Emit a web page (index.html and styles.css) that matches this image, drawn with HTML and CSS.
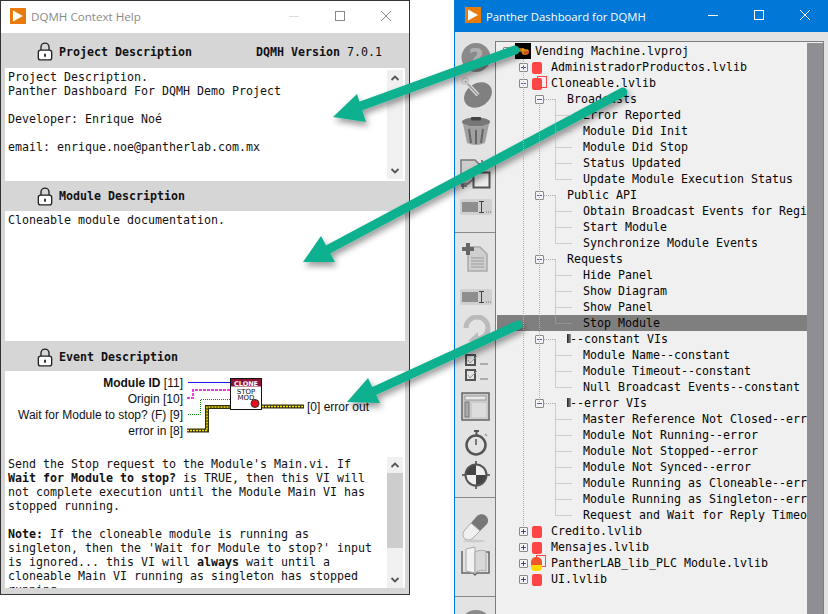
FILE: index.html
```html
<!DOCTYPE html>
<html lang="en">
<head>
<meta charset="utf-8">
<title>DQMH Context Help and Panther Dashboard</title>
<link rel="stylesheet" href="styles.css">
</head>
<body>
<div class="desktop">
  <section class="help-window">
    <header class="titlebar help-title">
      <svg class="app-icon" viewBox="0 0 16 16"><rect width="16" height="16" fill="#e87b0c"/><path d="M3 2.500L13 8L3 13.500Z" fill="#fff"/></svg>
      <span class="title-text">DQMH Context Help</span>
      <span class="win-controls">
        <svg class="ctl" viewBox="0 0 46 30"><path d="M18 15.500H28" stroke="#ddd"/></svg>
        <svg class="ctl" viewBox="0 0 46 30"><rect x="18.500" y="10.500" width="9" height="9" fill="none" stroke="#888"/></svg>
        <svg class="ctl" viewBox="0 0 46 30"><path d="M18 10L28 20M28 10L18 20" stroke="#888" fill="none"/></svg>
      </span>
    </header>
    <div class="section-head head-project">
      <svg class="lock" viewBox="0 0 18 22"><path d="M4.500 10V6a4.500 4.500 0 0 1 9 0V10" fill="none" stroke="#222" stroke-width="1.500"/><rect x="1.500" y="9.500" width="15" height="11" rx="2.500" fill="#fff" stroke="#222" stroke-width="1.500"/><path d="M9 13.500V17" stroke="#222" stroke-width="2"/></svg>
      <b class="head-label">Project Description</b>
      <span class="version"><b>DQMH Version</b> 7.0.1</span>
    </div>
    <div class="pane pane-project">
      <pre class="pane-text text-project">Project Description.
Panther Dashboard For DQMH Demo Project

Developer: Enrique Noé

email: enrique.noe@pantherlab.com.mx</pre>
      <div class="scroll">
        <svg class="chev" viewBox="0 0 16 16"><path d="M4.500 10L8 6.500L11.500 10" fill="none" stroke="#555" stroke-width="1.800"/></svg>
        <svg class="chev" viewBox="0 0 16 16"><path d="M4.500 6L8 9.500L11.500 6" fill="none" stroke="#555" stroke-width="1.800"/></svg>
      </div>
    </div>
    <div class="section-head head-module">
      <svg class="lock" viewBox="0 0 18 22"><path d="M4.500 10V6a4.500 4.500 0 0 1 9 0V10" fill="none" stroke="#222" stroke-width="1.500"/><rect x="1.500" y="9.500" width="15" height="11" rx="2.500" fill="#fff" stroke="#222" stroke-width="1.500"/><path d="M9 13.500V17" stroke="#222" stroke-width="2"/></svg>
      <b class="head-label">Module Description</b>
    </div>
    <div class="pane pane-module">
      <pre class="pane-text text-module">Cloneable module documentation.</pre>
    </div>
    <div class="section-head head-event">
      <svg class="lock" viewBox="0 0 18 22"><path d="M4.500 10V6a4.500 4.500 0 0 1 9 0V10" fill="none" stroke="#222" stroke-width="1.500"/><rect x="1.500" y="9.500" width="15" height="11" rx="2.500" fill="#fff" stroke="#222" stroke-width="1.500"/><path d="M9 13.500V17" stroke="#222" stroke-width="2"/></svg>
      <b class="head-label">Event Description</b>
    </div>
    <div class="pane pane-event">
      <div class="connector">
        <div class="terminals">
          <div><b>Module ID</b> [11]</div>
          <div>Origin [10]</div>
          <div>Wait for Module to stop? (F) [9]</div>
          <div>error in [8]</div>
        </div>
        <svg class="wires" viewBox="0 0 118 56" width="118" height="56">
          <path d="M1 4.500H43" stroke="#1a1ae6" fill="none"/>
          <path d="M0 20H6V12H43" stroke="#f03ce0" stroke-width="2" stroke-dasharray="3 1" fill="none"/>
          <path d="M1 36.500H13.500V21.500H43" stroke="#0a8a0a" stroke-dasharray="1 1" fill="none"/>
          <path d="M0 52.500H20V29H43" stroke="#33310a" stroke-width="4" fill="none"/>
          <path d="M0 52.500H20V29H43" stroke="#ffe600" stroke-width="1.500" stroke-dasharray="2 1" fill="none"/>
          <path d="M75 28.500H117" stroke="#33310a" stroke-width="4" fill="none"/>
          <path d="M75 28.500H117" stroke="#ffe600" stroke-width="1.500" stroke-dasharray="2 1" fill="none"/>
          <rect x="43.500" y="0.500" width="31" height="31" fill="#fff" stroke="#111"/>
          <rect x="44" y="1" width="30" height="7.500" fill="#8e1238"/>
          <text class="icon-head" x="59" y="7.500" text-anchor="middle">CLONE</text>
          <text class="icon-text" x="59" y="16" text-anchor="middle">STOP</text>
          <text class="icon-text" x="59" y="22" text-anchor="middle">MOD</text>
          <circle cx="68" cy="25.500" r="4" fill="#e8101c" stroke="#333"/>
        </svg>
        <div class="output">[0] error out</div>
      </div>
      <div class="event-body">
        <pre class="pane-text event-text">Send the Stop request to the Module's Main.vi. If
<b>Wait for Module to stop?</b> is TRUE, then this VI will
not complete execution until the Module Main VI has
stopped running.

<b>Note:</b> If the cloneable module is running as
singleton, then the 'Wait for Module to stop?' input
is ignored... this VI will <b>always</b> wait until a
cloneable Main VI running as singleton has stopped
running.</pre>
        <div class="scroll scroll-event">
          <svg class="chev" viewBox="0 0 16 16"><path d="M4.500 10L8 6.500L11.500 10" fill="none" stroke="#555" stroke-width="1.800"/></svg>
          <span class="thumb"></span>
          <svg class="chev chev-end" viewBox="0 0 16 16"><path d="M4.500 6L8 9.500L11.500 6" fill="none" stroke="#555" stroke-width="1.800"/></svg>
        </div>
      </div>
    </div>
  </section>

  <section class="dash-window">
    <header class="titlebar dash-title">
      <svg class="app-icon" viewBox="0 0 16 16"><rect width="16" height="16" fill="#e87b0c"/><path d="M3 2.500L13 8L3 13.500Z" fill="#fff"/></svg>
      <span class="title-text">Panther Dashboard for DQMH</span>
      <span class="win-controls">
        <svg class="ctl" viewBox="0 0 46 32"><path d="M18 15.500H28" stroke="#fff"/></svg>
        <svg class="ctl" viewBox="0 0 46 32"><rect x="18.500" y="10.500" width="9" height="9" fill="none" stroke="#fff"/></svg>
        <svg class="ctl" viewBox="0 0 46 32"><path d="M18 10L28 20M28 10L18 20" stroke="#fff" fill="none"/></svg>
      </span>
    </header>
    <div class="dash-body">
      <nav class="toolbar">
        <svg class="tool t-help" viewBox="0 0 32 32"><circle cx="16" cy="14.500" r="14.500" fill="#8a8a8a"/><text class="q-mark" x="16" y="25" text-anchor="middle">?</text></svg>
        <svg class="tool t-wrench" viewBox="0 0 32 32"><ellipse cx="18" cy="18" rx="15" ry="11.500" fill="#808080" transform="rotate(-35 18 18)"/><path d="M5 4L18 18" stroke="#ddd" stroke-width="4"/><path d="M5 4L18 18" stroke="#999" stroke-width="1.500"/><circle cx="5" cy="4" r="3" fill="none" stroke="#ccc" stroke-width="2"/></svg>
        <svg class="tool t-trash" viewBox="0 0 32 32"><ellipse cx="16" cy="8" rx="14" ry="4.500" fill="#777"/><rect x="11" y="3" width="10" height="3.500" rx="1" fill="#444"/><path d="M3 10L7 29Q16 33 25 29L29 10Q16 15 3 10Z" fill="#a0a0a0"/><path d="M9 15L11 29M16 16V30M23 15L21 29" stroke="#666" stroke-width="2"/></svg>
        <svg class="tool t-files" viewBox="0 0 32 32"><path d="M1 1H15L20 6V14L8 25H1Z" fill="#ccc" stroke="#777" stroke-width="1.500"/><rect x="13.500" y="13.500" width="16" height="15" fill="#eee" stroke="#555" stroke-width="2"/><path d="M22 1V9M18 5H26M3 25V30M1 27H7" stroke="#666" stroke-width="1.500"/></svg>
        <svg class="tool t-rename" viewBox="0 0 32 16"><rect x="0" y="0" width="32" height="16" rx="2" fill="#d0d0d0"/><rect x="2" y="3" width="16" height="10" fill="#8e8e8e"/><path d="M19 2.500H24M19 13.500H24M21.500 2.500V13.500" stroke="#444"/><path d="M26 13H31" stroke="#777" stroke-dasharray="1 1"/></svg>
        <hr class="tool-sep sep-one">
        <svg class="tool t-add" viewBox="0 0 32 32"><path d="M8 5H20L27 12V29H8Z" fill="#cfcfcf" stroke="#aaa" stroke-width="1.500"/><path d="M11 16H24M11 19H24M11 22H24M11 25H24" stroke="#999"/><path d="M8 1V13M2 7H14" stroke="#666" stroke-width="4"/></svg>
        <svg class="tool t-rename2" viewBox="0 0 32 16"><rect x="0" y="0" width="32" height="16" rx="2" fill="#d0d0d0"/><rect x="2" y="3" width="16" height="10" fill="#8e8e8e"/><path d="M19 2.500H24M19 13.500H24M21.500 2.500V13.500" stroke="#444"/><path d="M26 13H31" stroke="#777" stroke-dasharray="1 1"/></svg>
        <svg class="tool t-undo" viewBox="0 0 32 32"><path d="M6 13A11 11 0 1 1 17 24" fill="none" stroke="#bbb" stroke-width="5"/><path d="M8 26L18 17V28Z" fill="#bbb"/></svg>
        <svg class="tool t-check" viewBox="0 0 32 32"><rect x="6" y="1" width="9" height="10" fill="#e4e4e4" stroke="#555" stroke-width="2"/><rect x="6" y="16" width="9" height="10" fill="#e4e4e4" stroke="#555" stroke-width="2"/><path d="M8 6L10 9L17 2M8 21L10 24L17 17" stroke="#999" fill="none"/><path d="M20 10H28M20 25H28" stroke="#777"/></svg>
        <svg class="tool t-panel" viewBox="0 0 32 32"><rect x="2" y="1" width="27" height="27" fill="#ccc" stroke="#666" stroke-width="1.500"/><rect x="5" y="4" width="21" height="4" fill="#e8e8e8" stroke="#999"/><rect x="5" y="10" width="4" height="15" fill="#aaa" stroke="#777"/><rect x="12" y="11" width="14" height="14" fill="#ddd"/></svg>
        <svg class="tool t-timer" viewBox="0 0 32 32"><path d="M14 2H19M16.500 2V6" stroke="#555" stroke-width="2"/><circle cx="16" cy="16" r="9.500" fill="#e4e4e4" stroke="#555" stroke-width="2.500"/><path d="M16 10V16" stroke="#555" stroke-width="1.500"/><path d="M25 5L27 7" stroke="#999" stroke-width="1.500"/></svg>
        <svg class="tool t-target" viewBox="0 0 32 32"><path d="M16 2V30M2 16H30" stroke="#444" stroke-width="1.500"/><circle cx="16" cy="16" r="10.500" fill="#eee" stroke="#555" stroke-width="2"/><path d="M16 6A10 10 0 0 0 6 16H16ZM16 16V26A10 10 0 0 0 26 16Z" fill="#444"/></svg>
        <hr class="tool-sep sep-two">
        <svg class="tool t-pill" viewBox="0 0 32 32"><path d="M17 5L11 12L20 20L27 13C31 7 23 0 17 5Z" fill="#777"/><path d="M11 12L4 20C0 27 8 32 13 27L20 20Z" fill="#f0f0f0" stroke="#aaa"/><ellipse cx="14" cy="30" rx="11" ry="1.500" fill="#ccc"/></svg>
        <svg class="tool t-book" viewBox="0 0 32 32"><path d="M2 5V27H13L15 29L17 27H29V6H24" fill="#e2e2e2" stroke="#666" stroke-width="1.500"/><path d="M6 3L15 1V27L6 25Z" fill="#f2f2f2" stroke="#aaa"/><path d="M15 6C19 4 22 4 26 5V25C22 24 19 24 15 27Z" fill="#d8d8d8" stroke="#aaa"/></svg>
        <hr class="tool-sep sep-three">
        <div class="t-partial"></div>
      </nav>
      <div class="tree-frame">
        <div class="tree">
          <svg class="guides" width="310" height="560" viewBox="0 0 310 560">
            <path d="M26.500 16V484M42.500 60V360M47 56.500H58.500M47 216.500H58.500M47 152.500H58.500M47 296.500H58.500M47 360.500H58.500M58.500 56.500V136.500M58.500 152.500V200.500M58.500 216.500V280.500M58.500 296.500V344.500M58.500 360.500V472.500M58.500 72.500H75M58.500 88.500H75M58.500 104.500H75M58.500 120.500H75M58.500 136.500H75M58.500 168.500H75M58.500 184.500H75M58.500 200.500H75M58.500 232.500H75M58.500 248.500H75M58.500 264.500H75M58.500 280.500H75M58.500 312.500H75M58.500 328.500H75M58.500 344.500H75M58.500 376.500H75M58.500 392.500H75M58.500 408.500H75M58.500 424.500H75M58.500 440.500H75M58.500 456.500H75M58.500 472.500H75" stroke="#aaa" stroke-dasharray="1 1" fill="none"/>
          </svg>
          <div class="row lv0"><span class="box"></span><svg class="lvproj" viewBox="0 0 16 16"><rect width="16" height="16" fill="#000"/><path d="M3 5H8L11 7H14V10L12 12H8L6 9H3Z" fill="#c9571a"/><path d="M4 7H13M8 5V11" stroke="#f2c21c"/></svg><span class="lbl">Vending Machine.lvproj</span></div>
          <div class="row lv1"><span class="box plus"></span><span class="lib"></span><span class="lbl">AdministradorProductos.lvlib</span></div>
          <div class="row lv1"><span class="box"></span><span class="lib framed"></span><span class="lbl">Cloneable.lvlib</span></div>
          <div class="row lv2"><span class="box"></span><span class="lbl">Broadcasts</span></div>
          <div class="row lv3">Error Reported</div>
          <div class="row lv3">Module Did Init</div>
          <div class="row lv3">Module Did Stop</div>
          <div class="row lv3">Status Updated</div>
          <div class="row lv3">Update Module Execution Status</div>
          <div class="row lv2"><span class="box"></span><span class="lbl">Public API</span></div>
          <div class="row lv3">Obtain Broadcast Events for Registration</div>
          <div class="row lv3">Start Module</div>
          <div class="row lv3">Synchronize Module Events</div>
          <div class="row lv2"><span class="box"></span><span class="lbl">Requests</span></div>
          <div class="row lv3">Hide Panel</div>
          <div class="row lv3">Show Diagram</div>
          <div class="row lv3">Show Panel</div>
          <div class="row lv3 selected">Stop Module</div>
          <div class="row lv2"><span class="box"></span><span class="lbl"><i class="bar"></i>--constant VIs</span></div>
          <div class="row lv3">Module Name--constant</div>
          <div class="row lv3">Module Timeout--constant</div>
          <div class="row lv3">Null Broadcast Events--constant</div>
          <div class="row lv2"><span class="box"></span><span class="lbl"><i class="bar"></i>--error VIs</span></div>
          <div class="row lv3">Master Reference Not Closed--error</div>
          <div class="row lv3">Module Not Running--error</div>
          <div class="row lv3">Module Not Stopped--error</div>
          <div class="row lv3">Module Not Synced--error</div>
          <div class="row lv3">Module Running as Cloneable--error</div>
          <div class="row lv3">Module Running as Singleton--error</div>
          <div class="row lv3">Request and Wait for Reply Timeout--error</div>
          <div class="row lv1"><span class="box plus"></span><span class="lib"></span><span class="lbl">Credito.lvlib</span></div>
          <div class="row lv1"><span class="box plus"></span><span class="lib"></span><span class="lbl">Mensajes.lvlib</span></div>
          <div class="row lv1"><span class="box plus"></span><span class="lib framed warn"></span><span class="lbl">PantherLAB_lib_PLC Module.lvlib</span></div>
          <div class="row lv1"><span class="box plus"></span><span class="lib"></span><span class="lbl">UI.lvlib</span></div>
        </div>
        <div class="tree-scroll"></div>
      </div>
    </div>
  </section>

  <svg class="arrows" width="828" height="614" viewBox="0 0 828 614">
    <defs>
      <filter id="soft" x="-10%" y="-10%" width="125%" height="125%">
        <feDropShadow dx="2" dy="4" stdDeviation="3" flood-color="#000" flood-opacity="0.4"/>
      </filter>
    </defs>
    <g filter="url(#soft)" fill="#0bb08f">
      <path d="M515 50L358 107" stroke="#0bb08f" stroke-width="9" stroke-linecap="round"/>
      <path d="M333 117L357 94L366 122Z"/>
    </g>
    <g filter="url(#soft)" fill="#0bb08f">
      <path d="M623 92L327 250" stroke="#0bb08f" stroke-width="9" stroke-linecap="round"/>
      <path d="M303 262L321 236L335 262Z"/>
    </g>
    <g filter="url(#soft)" fill="#0bb08f">
      <path d="M518 325L372 392" stroke="#0bb08f" stroke-width="9" stroke-linecap="round"/>
      <path d="M347 402L368 378L380 403Z"/>
    </g>
  </svg>
</div>
</body>
</html>
```
FILE: styles.css
```css
html, body {
  margin: 0;
  padding: 0;
  background: #fff;
  overflow: hidden;
}
.desktop {
  position: relative;
  width: 828px;
  height: 614px;
  display: flex;
  align-items: flex-start;
  gap: 44px;
  overflow: hidden;
}
.titlebar {
  display: flex;
  align-items: center;
  font-family: "Open Sans", "Noto Sans", sans-serif;
  flex: none;
}
.app-icon { width: 16px; height: 16px; margin-left: 10px; flex: none; }
.title-text { margin-left: 5px; }
.win-controls { margin-left: auto; display: flex; }
.ctl { width: 46px; height: 32px; display: block; }

/* Help window */
.help-window {
  width: 410px;
  height: 595px;
  box-sizing: border-box;
  border: 1px solid #333;
  background: #d6d6d6;
  display: flex;
  flex-direction: column;
  flex: none;
}
.help-title {
  height: 30px;
  padding-bottom: 2px;
  background: #fff;
  color: #8a8a8a;
  font-size: 11.600px;
}
.help-title .app-icon { margin-left: 9px; }
.help-title .ctl { height: 30px; }
.section-head {
  display: flex;
  align-items: center;
  padding-left: 36px;
  font: 11.630px "DejaVu Sans Mono", monospace;
  color: #111;
  flex: none;
  box-sizing: border-box;
}
.head-project { height: 35px; padding-top: 2px; }
.head-module { height: 30px; }
.head-event { height: 30px; padding-top: 2px; }
.lock { width: 16px; height: 21px; flex: none; }
.head-label { margin-left: 6px; }
.version { margin-left: auto; margin-right: 27px; }
.pane {
  margin: 0 4px;
  background: #fff;
  display: flex;
  flex: none;
}
.pane-project { height: 113px; }
.pane-module { height: 130px; }
.pane-event { height: 217px; flex-direction: column; }
.pane-text {
  margin: 0;
  padding: 0 0 0 3px;
  flex: 1;
  min-width: 0;
  overflow: hidden;
  font: 11.630px/14px "DejaVu Sans Mono", monospace;
  color: #111;
}
.text-project { padding-top: 2px; }
.text-module { padding-top: 2px; }
.scroll {
  width: 16px;
  margin: 2px 2px 2px 0;
  background: #f0f0f0;
  display: flex;
  flex-direction: column;
  justify-content: space-between;
  flex: none;
}
.chev { display: block; width: 16px; height: 16px; flex: none; }
.connector {
  height: 86px;
  flex: none;
  display: flex;
  align-items: flex-start;
  font: 12px/16px "Liberation Sans", Arial, sans-serif;
  color: #111;
  padding-top: 4px;
  box-sizing: border-box;
}
.terminals { width: 178px; text-align: right; flex: none; }
.wires { margin-left: 4px; margin-top: 3px; flex: none; }
.output { margin-left: 2px; margin-top: 24px; white-space: nowrap; }
.icon-head { font: bold 6.500px "DejaVu Sans", sans-serif; fill: #fff; }
.icon-text { font: 7px "DejaVu Sans", sans-serif; fill: #111; }
.event-body { display: flex; flex: 1; min-height: 0; }
.event-text { padding-top: 0; }
.scroll-event { margin: 0 2px 0 0; justify-content: flex-start; }
.scroll-event .thumb { display: block; width: 16px; height: 75px; background: #cdcdcd; flex: none; }
.scroll-event .chev-end { margin-top: auto; }

/* Dashboard window */
.dash-window {
  width: 374px;
  height: 614px;
  box-sizing: border-box;
  border-left: 1px solid #0078d7;
  background: #e3e3e3;
  display: flex;
  flex-direction: column;
  flex: none;
}
.dash-title { height: 32px; background: #0078d7; color: #fff; font-size: 11.300px; }
.dash-title .app-icon { margin-bottom: 2px; }
.dash-body { display: flex; flex: 1; min-height: 0; }
.toolbar {
  width: 40px;
  box-sizing: border-box;
  padding-left: 2px;
  flex: none;
  display: flex;
  flex-direction: column;
  align-items: center;
}
.tool { display: block; width: 32px; height: 32px; flex: none; }
.t-help { margin-top: 11px; }
.t-wrench { margin-top: 2px; }
.t-trash { margin-top: 5px; }
.t-files { margin-top: 13px; }
.t-rename { margin-top: 8px; height: 16px; }
.tool-sep {
  width: 40px;
  height: 1px;
  margin: 0 0 0 -2px;
  border: 0;
  background: #8a8a8a;
  flex: none;
  align-self: flex-start;
}
.sep-one { margin-top: 17px; }
.t-add { margin-top: 9px; }
.t-rename2 { margin-top: 15px; height: 16px; }
.t-undo { margin-top: 10px; }
.t-check { margin-top: 7px; }
.t-panel { margin-top: 6px; }
.t-timer { margin-top: 5px; }
.t-target { margin-top: -2px; }
.sep-two { margin-top: 6px; }
.t-pill { margin-top: 13px; }
.t-book { margin-top: 3px; }
.sep-three { margin-top: 18px; }
.t-partial { width: 32px; height: 32px; border-radius: 50%; background: #8a8a8a; margin-top: 13px; flex: none; }
.tree-frame {
  margin: 9px 4px 0 0;
  width: 329px;
  flex: none;
  height: 580px;
  border: 1px solid #7d7d7d;
  border-bottom: 0;
  box-sizing: border-box;
  background: #f0f0f0;
  display: flex;
  padding: 1px 0 0 1px;
}
.tree {
  position: relative;
  width: 310px;
  flex: none;
  overflow: hidden;
  font: 11.630px/16px "DejaVu Sans Mono", monospace;
  color: #050505;
}
.tree-scroll { flex: 1; background: #8f8f93; }
.guides { position: absolute; left: 0; top: 0; z-index: 1; }
.row {
  position: relative;
  isolation: isolate;
  display: flex;
  align-items: center;
  height: 16px;
  white-space: nowrap;
}
.lv0 { padding-left: 6px; }
.lv1 { padding-left: 22px; }
.lv2 { padding-left: 38px; }
.lv3 { padding-left: 86px; }
.selected { background: #7f7f7f; }
.box {
  position: relative;
  z-index: 2;
  width: 9px;
  height: 9px;
  box-sizing: border-box;
  flex: none;
  border: 1px solid #8a8a8a;
  border-radius: 1px;
  background: linear-gradient(#4a5fb0, #4a5fb0) center / 5px 1px no-repeat, #f4f4f4;
}
.box.plus {
  background:
    linear-gradient(#3a4f9c, #3a4f9c) center / 5px 1px no-repeat,
    linear-gradient(#3a4f9c, #3a4f9c) center / 1px 5px no-repeat,
    #f4f4f4;
}
.lvproj { width: 16px; height: 16px; margin-left: 3px; flex: none; }
.lv0 .lbl { margin-left: 4px; }
.lib {
  position: relative;
  width: 10px;
  height: 12px;
  margin: 1px 0 0 4px;
  border-radius: 2px;
  background: #ff4545;
  flex: none;
}
.lib.framed::after {
  content: "";
  position: absolute;
  z-index: -1;
  left: 5px;
  top: -2px;
  width: 8px;
  height: 10px;
  border: 1px solid #ff4545;
}
.lib.warn {
  width: 11px;
  height: 14px;
  margin-left: 3px;
  background: linear-gradient(#f2542c 55%, #ffd800 55%);
  border-radius: 5px 5px 4px 4px;
}
.lv1 .lbl { margin-left: 9px; }
.lv2 .lbl { margin-left: 23px; }
.bar {
  display: inline-block;
  width: 4px;
  height: 9px;
  margin-right: -1px;
  background: linear-gradient(90deg, #222, #999);
}
.q-mark { font: bold 26px "DejaVu Sans", sans-serif; fill: #b0b0b0; }

/* Callout arrows over both windows */
.arrows { position: absolute; left: 0; top: 0; pointer-events: none; }
```
